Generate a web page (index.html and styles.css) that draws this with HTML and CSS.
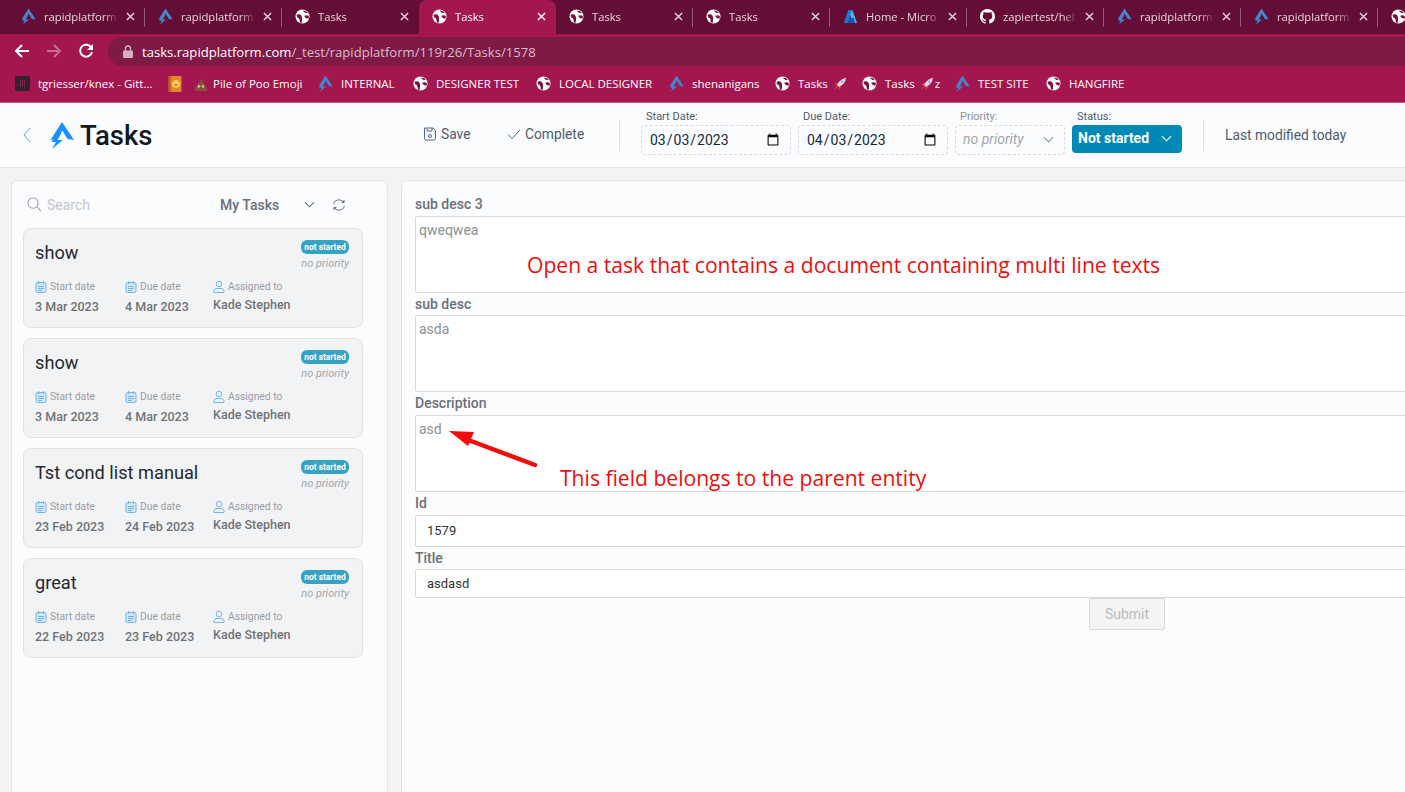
FILE: index.html
```html
<!DOCTYPE html>
<html lang="en">
<head>
  <meta charset="UTF-8" />
  <title>Tasks</title>
  <link rel="stylesheet" href="styles.css">
</head>
<body>
  <svg class="defs" width="0" height="0">
    <symbol id="rapid" viewBox="0 0 24 28">
      <path d="M12 1 24 19 17.5 18 12.3 9.5 7 18 0.5 19Z"/>
      <path d="M12 11 7.500 19H13L2 28 6 21H1Z"/>
    </symbol>
    <symbol id="globe" viewBox="0 0 16 16">
      <circle cx="8" cy="8" r="7.500" fill="#fff"/>
      <path fill="#7a1140" d="M1.500 6.500C3.500 5 6 5.500 7 7.500C8 9.500 7.500 12 7 14.800L5 14C5 11.500 5 9.500 2.500 9ZM8.500 1.500C9.500 3.500 11.500 4.500 13.500 4.300L12 2.500ZM9.800 7.300C11.500 6.300 13.500 6.500 14.800 7.500L14.500 10.500C12.500 10.300 10.500 9.300 9.800 7.300Z"/>
    </symbol>
    <symbol id="close" viewBox="0 0 10 10">
      <path d="M1 1 9 9M9 1 1 9" fill="none" stroke="currentColor" stroke-width="1.500"/>
    </symbol>
    <symbol id="cal" viewBox="0 0 12 13">
      <rect x="1" y="2.500" width="10" height="10" rx="1.500" fill="#d3e9fb" stroke="#6db6f2"/>
      <path d="M3.500 1V4M8.500 1V4M3 6.500H9M3 8.500H9M3 10.500H7" fill="none" stroke="#6db6f2"/>
    </symbol>
    <symbol id="user" viewBox="0 0 12 13">
      <circle cx="6" cy="4" r="2.800" fill="none" stroke="#6db6f2"/>
      <path d="M1 12.500V11C1 9.500 2.500 8.500 4 8.500H8C9.500 8.500 11 9.500 11 11V12.500Z" fill="none" stroke="#6db6f2"/>
    </symbol>
    <symbol id="chev" viewBox="0 0 12 7">
      <path d="M1 1 6 6 11 1" fill="none" stroke="currentColor" stroke-width="1.200"/>
    </symbol>
    <symbol id="rocket" viewBox="0 0 14 14">
      <path fill="#f3d6e0" d="M13 1C9 1.500 5.500 4.500 4 8L6 10C9.500 8.500 12.500 5 13 1Z"/>
      <circle cx="9.200" cy="4.800" r="1.200" fill="#6fb4e8"/>
      <path fill="#e2463f" d="M4 8 1 8.500 4 5.500ZM6 10 5.500 13 8.500 10ZM4 9 5 10 1 13Z"/>
    </symbol>
    <symbol id="poo" viewBox="0 0 14 12">
      <path fill="#8a5138" d="M7 0C8.500 1 9 2 8.800 3C10 3.300 10.500 4.300 10.200 5.300C11.500 5.600 12 6.800 11.500 7.800C13.500 8.200 14.500 11.500 12 12H2C-0.500 11.500 0.500 8.200 2.500 7.800C2 6.800 2.500 5.600 3.800 5.300C3.500 4 4.500 3.200 5.800 3C6.500 2 6.800 1 7 0Z"/>
      <circle cx="5" cy="7.500" r="1.200" fill="#f4e4e4"/>
      <circle cx="9" cy="7.500" r="1.200" fill="#f4e4e4"/>
      <circle cx="5.200" cy="7.700" r=".5" fill="#3a2018"/>
      <circle cx="9.200" cy="7.700" r=".5" fill="#3a2018"/>
    </symbol>
  </svg>

  <div class="tabstrip">
    <div class="tab"><svg class="logo-sm"><use href="#rapid"/></svg><span class="tab-title">rapidplatform</span><svg class="tab-x"><use href="#close"/></svg></div>
    <div class="tab"><svg class="logo-sm"><use href="#rapid"/></svg><span class="tab-title">rapidplatform</span><svg class="tab-x"><use href="#close"/></svg></div>
    <div class="tab no-sep"><svg class="globe"><use href="#globe"/></svg><span class="tab-title">Tasks</span><svg class="tab-x"><use href="#close"/></svg></div>
    <div class="tab active"><svg class="globe"><use href="#globe"/></svg><span class="tab-title">Tasks</span><svg class="tab-x"><use href="#close"/></svg></div>
    <div class="tab"><svg class="globe"><use href="#globe"/></svg><span class="tab-title">Tasks</span><svg class="tab-x"><use href="#close"/></svg></div>
    <div class="tab"><svg class="globe"><use href="#globe"/></svg><span class="tab-title">Tasks</span><svg class="tab-x"><use href="#close"/></svg></div>
    <div class="tab">
      <svg class="logo-sm" viewBox="0 0 16 16"><path fill="#1a78d0" d="M5.500 1H10L5.500 15H1Z"/><path fill="#50b4ee" d="M10 1 15 15H10.500L7.500 5.500Z"/><path fill="#0f5fae" d="M7.500 9.500H11.500L13 15H5.500Z"/></svg>
      <span class="tab-title">Home - Micro</span><svg class="tab-x"><use href="#close"/></svg>
    </div>
    <div class="tab">
      <svg class="globe" viewBox="0 0 16 16"><path fill="#fff" d="M8 0C3.580 0 0 3.580 0 8c0 3.540 2.290 6.530 5.470 7.590.4.070.55-.17.55-.38 0-.19-.01-.82-.01-1.490-2.010.37-2.530-.49-2.690-.94-.09-.23-.48-.94-.82-1.130-.28-.15-.68-.52-.01-.53.63-.01 1.080.58 1.230.82.72 1.210 1.870.87 2.330.66.070-.52.28-.87.510-1.070-1.780-.2-3.640-.89-3.640-3.950 0-.87.310-1.590.820-2.150-.08-.2-.36-1.020.08-2.120 0 0 .67-.21 2.200.82.640-.18 1.320-.27 2-.27s1.360.09 2 .27c1.530-1.040 2.200-.82 2.200-.82.440 1.100.16 1.920.08 2.120.51.560.82 1.270.82 2.150 0 3.070-1.870 3.750-3.650 3.950.290.250.540.730.540 1.480 0 1.070-.01 1.930-.01 2.200 0 .21.150.460.550.380A8.010 8.010 0 0 0 16 8c0-4.420-3.580-8-8-8z"/></svg>
      <span class="tab-title">zapiertest/hel</span><svg class="tab-x"><use href="#close"/></svg>
    </div>
    <div class="tab"><svg class="logo-sm"><use href="#rapid"/></svg><span class="tab-title">rapidplatform</span><svg class="tab-x"><use href="#close"/></svg></div>
    <div class="tab"><svg class="logo-sm"><use href="#rapid"/></svg><span class="tab-title">rapidplatform</span><svg class="tab-x"><use href="#close"/></svg></div>
    <div class="tab"><svg class="globe"><use href="#globe"/></svg></div>
  </div>

  <div class="toolbar">
    <svg class="nav-icon" viewBox="0 0 16 16"><path d="M15 8H2M8 2 2 8 8 14" fill="none" stroke="#fff" stroke-width="2"/></svg>
    <svg class="nav-icon" viewBox="0 0 16 16"><path d="M1 8H14M8 2 14 8 8 14" fill="none" stroke="#c46f93" stroke-width="2"/></svg>
    <svg class="nav-icon" viewBox="0 0 16 16"><path d="M13.500 5A6 6 0 1 0 14 9" fill="none" stroke="#fff" stroke-width="2"/><path d="M15 1V7H9Z" fill="#fff"/></svg>
    <div class="omnibox">
      <svg class="lock" viewBox="0 0 10 13"><path d="M2.500 6V3.500a2.500 2.500 0 0 1 5 0V6" fill="none" stroke="#d2b0c0" stroke-width="1.300"/><rect y="5.500" width="10" height="7.500" rx="1" fill="#d2b0c0"/></svg>
      <span class="host">tasks.rapidplatform.com</span><span class="path">/_test/rapidplatform/119r26/Tasks/1578</span>
    </div>
  </div>

  <div class="bookmarks">
    <div class="bm bm-knex"><span class="knex-icon"></span>tgriesser/knex - Gitt...</div>
    <div class="bm bm-book"><svg class="book-icon" viewBox="0 0 14 16"><rect width="13.500" height="16" rx="1" fill="#e8842c"/><rect width="2.500" height="16" fill="#b8552a"/><circle cx="8" cy="8" r="3.800" fill="#f7d35a"/><path d="M6 8.500C6.500 10 9.500 10 10 8.500Z" fill="#7a4a1c"/></svg></div>
    <div class="bm bm-poo"><svg class="poo-icon" viewBox="0 0 14 12"><use href="#poo"/></svg>Pile of Poo Emoji</div>
    <div class="bm bm-internal"><svg class="logo-sm"><use href="#rapid"/></svg>INTERNAL</div>
    <div class="bm bm-designer"><svg class="globe"><use href="#globe"/></svg>DESIGNER TEST</div>
    <div class="bm bm-local"><svg class="globe"><use href="#globe"/></svg>LOCAL DESIGNER</div>
    <div class="bm bm-shen"><svg class="logo-sm"><use href="#rapid"/></svg>shenanigans</div>
    <div class="bm bm-tasks1"><svg class="globe"><use href="#globe"/></svg>Tasks<svg class="rocket"><use href="#rocket"/></svg></div>
    <div class="bm bm-tasks2"><svg class="globe"><use href="#globe"/></svg>Tasks<svg class="rocket"><use href="#rocket"/></svg>z</div>
    <div class="bm bm-test"><svg class="logo-sm"><use href="#rapid"/></svg>TEST SITE</div>
    <div class="bm"><svg class="globe"><use href="#globe"/></svg>HANGFIRE</div>
  </div>

  <header class="app-header">
    <svg class="back" viewBox="0 0 8 16"><path d="M7 1 1 8 7 15" fill="none" stroke="#5c9df2" stroke-width="1"/></svg>
    <svg class="brand" viewBox="0 0 24 28" fill="#1890ff"><use href="#rapid"/></svg>
    <h1 class="app-title">Tasks</h1>
    <button class="action action-save">
      <svg viewBox="0 0 14 14"><path d="M1.500 1H10L12.500 3.500V11.500A1.500 1.500 0 0 1 11 13H3A1.500 1.500 0 0 1 1.500 11.500Z" fill="none" stroke="#4d6a8c"/><path d="M4 1V4H9V1" fill="none" stroke="#4d6a8c"/><circle cx="7" cy="9" r="1.500" fill="none" stroke="#4d6a8c"/></svg>
      Save
    </button>
    <button class="action action-complete">
      <svg viewBox="0 0 14 14"><path d="M1 7.500 5 11.500 13 3" fill="none" stroke="#4d6a8c"/></svg>
      Complete
    </button>
    <div class="vr vr-first"></div>
    <div class="field">
      <label>Start Date:</label>
      <input class="date-box" type="date" value="2023-03-03">
    </div>
    <div class="field">
      <label>Due Date:</label>
      <input class="date-box" type="date" value="2023-04-03">
    </div>
    <div class="field">
      <label class="label-dim">Priority:</label>
      <div class="priority-box">no priority<svg class="chev"><use href="#chev"/></svg></div>
    </div>
    <div class="field">
      <label>Status:</label>
      <div class="status-box">Not started<svg class="chev"><use href="#chev"/></svg></div>
    </div>
    <div class="vr vr-last"></div>
    <div class="modified">Last modified today</div>
  </header>

  <div class="content">
    <aside class="sidebar">
      <div class="side-top">
        <svg class="search-icon" viewBox="0 0 16 16"><circle cx="6.500" cy="6.500" r="5.500" fill="none" stroke="#9a9da3" stroke-width="1.100"/><path d="M10.500 10.500 15 15" stroke="#9a9da3" stroke-width="1.100"/></svg>
        <span class="search-text">Search</span>
        <span class="my-tasks">My Tasks</span>
        <svg class="chev side-chev"><use href="#chev"/></svg>
        <svg class="refresh" viewBox="0 0 14 14"><path d="M1.500 6A5.500 5 0 0 1 11.500 4M12.500 8A5.500 5 0 0 1 2.500 10" fill="none" stroke="#6f7379"/><path d="M12.500 1.500V5H9ZM1.500 12.500V9H5Z" fill="#6f7379"/></svg>
      </div>

      <div class="card">
        <div class="card-head">
          <div class="card-title">show</div>
          <div class="card-tags"><span class="badge">not started</span><span class="card-priority">no priority</span></div>
        </div>
        <div class="card-meta">
          <div class="meta meta-start"><div class="meta-label"><svg><use href="#cal"/></svg>Start date</div><div class="meta-value">3 Mar 2023</div></div>
          <div class="meta meta-due"><div class="meta-label"><svg><use href="#cal"/></svg>Due date</div><div class="meta-value">4 Mar 2023</div></div>
          <div class="meta"><div class="meta-label"><svg><use href="#user"/></svg>Assigned to</div><div class="meta-value assignee">Kade Stephen</div></div>
        </div>
      </div>

      <div class="card">
        <div class="card-head">
          <div class="card-title">show</div>
          <div class="card-tags"><span class="badge">not started</span><span class="card-priority">no priority</span></div>
        </div>
        <div class="card-meta">
          <div class="meta meta-start"><div class="meta-label"><svg><use href="#cal"/></svg>Start date</div><div class="meta-value">3 Mar 2023</div></div>
          <div class="meta meta-due"><div class="meta-label"><svg><use href="#cal"/></svg>Due date</div><div class="meta-value">4 Mar 2023</div></div>
          <div class="meta"><div class="meta-label"><svg><use href="#user"/></svg>Assigned to</div><div class="meta-value assignee">Kade Stephen</div></div>
        </div>
      </div>

      <div class="card">
        <div class="card-head">
          <div class="card-title">Tst cond list manual</div>
          <div class="card-tags"><span class="badge">not started</span><span class="card-priority">no priority</span></div>
        </div>
        <div class="card-meta">
          <div class="meta meta-start"><div class="meta-label"><svg><use href="#cal"/></svg>Start date</div><div class="meta-value">23 Feb 2023</div></div>
          <div class="meta meta-due"><div class="meta-label"><svg><use href="#cal"/></svg>Due date</div><div class="meta-value">24 Feb 2023</div></div>
          <div class="meta"><div class="meta-label"><svg><use href="#user"/></svg>Assigned to</div><div class="meta-value assignee">Kade Stephen</div></div>
        </div>
      </div>

      <div class="card">
        <div class="card-head">
          <div class="card-title">great</div>
          <div class="card-tags"><span class="badge">not started</span><span class="card-priority">no priority</span></div>
        </div>
        <div class="card-meta">
          <div class="meta meta-start"><div class="meta-label"><svg><use href="#cal"/></svg>Start date</div><div class="meta-value">22 Feb 2023</div></div>
          <div class="meta meta-due"><div class="meta-label"><svg><use href="#cal"/></svg>Due date</div><div class="meta-value">23 Feb 2023</div></div>
          <div class="meta"><div class="meta-label"><svg><use href="#user"/></svg>Assigned to</div><div class="meta-value assignee">Kade Stephen</div></div>
        </div>
      </div>
    </aside>

    <main class="panel">
      <form class="task-form">
        <label class="form-label">sub desc 3</label>
        <textarea class="form-area" readonly>qweqwea</textarea>
        <label class="form-label">sub desc</label>
        <textarea class="form-area" readonly>asda</textarea>
        <label class="form-label">Description</label>
        <textarea class="form-area" readonly>asd</textarea>
        <label class="form-label">Id</label>
        <input class="form-input form-id" type="text" value="1579" readonly>
        <label class="form-label">Title</label>
        <input class="form-input form-title" type="text" value="asdasd" readonly>
        <button class="submit" type="button" disabled>Submit</button>
      </form>
    </main>
  </div>

  <!-- red notes drawn on top of the screenshot -->
  <div class="note note-open">Open a task that contains a document containing multi line texts</div>
  <div class="note note-parent">This field belongs to the parent entity</div>
  <svg class="note-arrow" viewBox="0 0 92 46"><path d="M14 8 86 35" stroke="#f20c0c" stroke-width="4.500" stroke-linecap="round"/><path d="M0 1 25 2 19 16Z" fill="#f20c0c"/></svg>
</body>
</html>
```

FILE: styles.css
```css
* {
  box-sizing: border-box;
  margin: 0;
  padding: 0;
}
html, body {
  height: 792px;
  overflow: hidden;
}
body {
  position: relative;
  font-family: Roboto, 'Liberation Sans', sans-serif;
  background: #f2f3f5;
  color: #333;
}
.defs {
  position: absolute;
}

/* browser chrome */
.tabstrip {
  display: flex;
  height: 34px;
  padding-left: 8px;
  background: #640d36;
  overflow: hidden;
  font-family: 'Open Sans', sans-serif;
}
.tab {
  flex: none;
  display: flex;
  align-items: center;
  width: 137px;
  height: 34px;
  padding: 0 10px 1px 13px;
  color: #e8d5de;
  font-size: 11.200px;
  position: relative;
}
.tab::after {
  content: '';
  position: absolute;
  right: 0;
  top: 8px;
  height: 19px;
  border-right: 1px solid #95587a;
}
.tab.no-sep::after, .tab.active::after {
  display: none;
}
.tab.active {
  background: #a3164f;
  color: #fff;
  border-radius: 8px 8px 0 0;
}
.tab-title {
  flex: 1;
  min-width: 0;
  margin-left: 8px;
  white-space: nowrap;
  -webkit-mask-image: linear-gradient(to right, #000 80%, transparent);
  mask-image: linear-gradient(to right, #000 80%, transparent);
}
.tab-x {
  flex: none;
  width: 9px;
  height: 9px;
  margin-left: 7px;
}
.logo-sm {
  flex: none;
  width: 15px;
  height: 17px;
  fill: #4585c9;
}
.globe {
  flex: none;
  width: 15px;
  height: 15px;
}
.toolbar {
  display: flex;
  align-items: center;
  height: 33px;
  padding-left: 14px;
  background: #a3164f;
}
.nav-icon {
  flex: none;
  width: 16px;
  height: 16px;
  margin-right: 16px;
}
.omnibox {
  flex: 1;
  display: flex;
  align-items: center;
  height: 29px;
  margin-top: 2px;
  margin-left: -2px;
  margin-right: -20px;
  padding-left: 15px;
  border-radius: 15px;
  background: #7f1a47;
  font-family: 'Open Sans', sans-serif;
  font-size: 13.100px;
}
.lock {
  width: 10px;
  height: 13px;
  margin-right: 9px;
}
.host {
  color: #fff;
}
.path {
  color: #d9bccb;
}
.bookmarks {
  display: flex;
  align-items: center;
  height: 36px;
  padding: 0 0 2px 15px;
  background: #a3164f;
  border-bottom: 1px solid #c0547f;
  color: #fff;
  font-family: 'Open Sans', sans-serif;
  font-size: 11.500px;
}
.bm {
  flex: none;
  display: flex;
  align-items: center;
  gap: 8px;
  white-space: nowrap;
}
.bm-knex { width: 153px; }
.bm-book { width: 26px; }
.bm-poo { width: 124px; gap: 5px; }
.bm-internal { width: 95px; }
.bm-designer { width: 123px; }
.bm-local { width: 133px; }
.bm-shen { width: 106px; }
.bm-tasks1 { width: 87px; }
.bm-tasks2 { width: 93px; }
.bm-test { width: 91px; }
.knex-icon {
  width: 15px;
  height: 15px;
  border-radius: 2px;
  background: linear-gradient(to right, transparent 5px, #7a2746 5px 6px, transparent 6px 7px, #7a2746 7px 8px, transparent 8px 9px, #7a2746 9px 10px, transparent 10px) center / 100% 7px no-repeat, #35202b;
}
.book-icon {
  width: 14px;
  height: 16px;
}
.poo-icon {
  width: 14px;
  height: 12px;
  margin-top: 2px;
}
.rocket {
  width: 14px;
  height: 14px;
  margin-left: -3px;
}
.bm-tasks2 .rocket {
  margin-right: -7px;
}

/* app header */
.app-header {
  display: flex;
  align-items: center;
  height: 65px;
  background: #fbfcfe;
  border-bottom: 1px solid #e3e4e6;
}
.back {
  width: 8px;
  height: 16px;
  margin-left: 23px;
}
.brand {
  width: 24px;
  height: 28px;
  margin-left: 19px;
}
.app-title {
  width: 72px;
  margin-left: 6px;
  margin-right: 271px;
  font-size: 27.500px;
  font-weight: 500;
  color: #14181f;
  white-space: nowrap;
}
.action {
  display: flex;
  align-items: center;
  gap: 4px;
  border: none;
  background: none;
  font-family: inherit;
  font-size: 13.800px;
  color: #4f5b6b;
  margin-top: -2px;
}
.action svg {
  width: 14px;
  height: 14px;
}
.action-save { width: 84px; }
.action-complete { width: 112px; }
.vr {
  width: 1px;
  height: 32px;
  background: #dfe1e4;
}
.vr-first { margin-right: 21px; }
.vr-last { margin-left: 14px; margin-right: 21px; }
.field {
  display: flex;
  flex-direction: column;
  margin-right: 7px;
  margin-top: -4px;
}
.field label {
  height: 14px;
  padding-left: 5px;
  font-size: 11px;
  line-height: 12px;
  color: #4f5b6b;
}
.field .label-dim {
  color: #8b9097;
}
.date-box {
  width: 150px;
  height: 30px;
  padding: 0 8px 0 7px;
  border: 1px dashed #d8d9dc;
  border-radius: 4px;
  background: #fbfcfe;
  font-family: inherit;
  font-size: 14px;
  color: #14283c;
}
.priority-box {
  display: flex;
  align-items: center;
  justify-content: space-between;
  width: 110px;
  height: 30px;
  padding: 0 10px 2px 7px;
  border: 1px dashed #d8d9dc;
  border-radius: 4px;
  font-size: 14px;
  font-style: italic;
  color: #a2a6ac;
}
.chev {
  width: 11px;
  height: 7px;
  color: #8b9097;
}
.status-box {
  display: flex;
  align-items: center;
  justify-content: space-between;
  width: 110px;
  height: 28px;
  margin-bottom: 2px;
  padding: 0 10px 2px 6px;
  border-radius: 4px;
  background: #0089b7;
  color: #fff;
  font-size: 14px;
  font-weight: 700;
}
.status-box .chev {
  color: #fff;
}
.modified {
  font-size: 13.800px;
  color: #4f5b6b;
}

/* content */
.content {
  display: flex;
  gap: 13px;
  height: 624px;
  padding: 12px 0 0 11px;
}
.sidebar {
  flex: none;
  width: 377px;
  height: 640px;
  padding: 0 24px 0 11px;
  background: #fbfcfe;
  border: 1px solid #e3e4e6;
  border-radius: 6px;
}
.side-top {
  display: flex;
  align-items: center;
  height: 47px;
  padding-left: 4px;
}
.search-icon {
  width: 15px;
  height: 15px;
}
.search-text {
  margin-left: 5px;
  width: 173px;
  font-size: 14px;
  color: #c4c6ca;
}
.my-tasks {
  width: 84px;
  font-size: 14px;
  font-weight: 500;
  color: #6b7078;
}
.side-chev {
  color: #6b7078;
}
.refresh {
  width: 14px;
  height: 14px;
  margin-left: 17px;
}
.card {
  height: 100px;
  margin-bottom: 10px;
  padding: 11px 13px 0 11px;
  background: #f2f3f5;
  border: 1px solid #e0e2e4;
  border-radius: 8px;
}
.card-head {
  display: flex;
  justify-content: space-between;
  height: 36px;
}
.card-title {
  margin-top: 1px;
  font-size: 18.200px;
  line-height: 24px;
  color: #24282e;
}
.card-tags {
  display: flex;
  flex-direction: column;
  align-items: flex-end;
}
.badge {
  width: 48px;
  height: 14px;
  border-radius: 6px;
  background: #36a3c4;
  color: #fff;
  font-size: 8.400px;
  font-weight: 700;
  line-height: 14px;
  text-align: center;
  white-space: nowrap;
}
.card-priority {
  margin-top: 3px;
  font-size: 11px;
  font-style: italic;
  color: #a2a6ac;
}
.card-meta {
  display: flex;
  margin-top: 3px;
}
.meta-start { width: 90px; }
.meta-due { width: 88px; }
.meta-label {
  display: flex;
  align-items: center;
  gap: 3px;
  height: 14px;
  font-size: 10.300px;
  color: #9a9da3;
}
.meta-label svg {
  width: 12px;
  height: 13px;
}
.meta-value {
  margin-top: 6px;
  font-size: 12.500px;
  font-weight: 500;
  color: #6f7379;
}
.assignee {
  margin-top: 4px;
}
.panel {
  flex: none;
  width: 1460px;
  height: 640px;
  padding: 14px 0 0 13px;
  background: #fbfcfe;
  border: 1px solid #e3e4e6;
  border-radius: 6px;
}
.task-form {
  display: flex;
  flex-direction: column;
  width: 1424px;
}
.form-label {
  height: 20.500px;
  font-size: 14px;
  font-weight: 500;
  line-height: 18px;
  color: #6b7078;
}
.form-area {
  display: block;
  height: 77.200px;
  margin-bottom: 2px;
  padding: 5px 3px;
  border: 1px solid #d7d9db;
  border-radius: 2px;
  background: #fff;
  font-family: inherit;
  font-size: 14px;
  color: #8c9096;
  outline: none;
  resize: none;
}
.form-input {
  padding: 0 11px;
  border: 1px solid #d7d9db;
  border-radius: 2px;
  background: #fff;
  font-family: inherit;
  font-size: 13px;
  color: #333;
  outline: none;
}
.form-id {
  height: 32px;
  margin-bottom: 2px;
}
.form-title {
  height: 29px;
}
.submit {
  align-self: center;
  width: 76px;
  height: 32px;
  border: 1px solid #d7d9db;
  border-radius: 2px;
  background: #f4f4f4;
  font-family: inherit;
  font-size: 14px;
  color: #b9bcc0;
}

/* red notes */
.note {
  position: absolute;
  color: #ee0e0e;
  font-family: 'Open Sans', sans-serif;
  font-size: 21.100px;
  white-space: nowrap;
}
.note-open {
  left: 527px;
  top: 250px;
}
.note-parent {
  left: 560px;
  top: 463px;
}
.note-arrow {
  position: absolute;
  left: 449px;
  top: 430px;
  width: 92px;
  height: 46px;
}
```
